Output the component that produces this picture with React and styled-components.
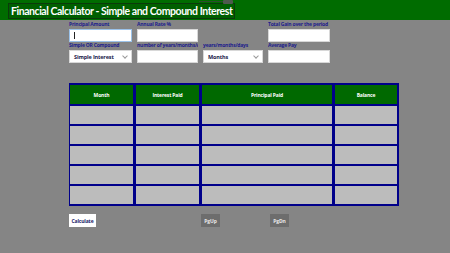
import styled, { createGlobalStyle } from 'styled-components';

const GlobalStyle = createGlobalStyle`
  html, body {
    margin: 0;
    padding: 0;
    background: #858585;
    width: 450px;
    height: 253px;
    overflow: hidden;
  }
  * { box-sizing: border-box; }
`;

const Page = styled.div`
  position: relative;
  width: 450px;
  height: 253px;
  background: #858585;
  font-family: "Open Sans", "Noto Sans", sans-serif;
`;

const TitleBar = styled.div`
  display: flex;
  align-items: flex-start;
  height: 20px;
  background: #006c00;
  padding: 3px 0 0 8px;
`;

const Title = styled.h1`
  margin: 0;
  height: 16px;
  padding: 0 2px;
  border: 1px solid #0b3a0b;
  background: #005f00;
  color: #ffffff;
  font-family: "Lato", sans-serif;
  font-weight: 700;
  font-size: 10.5px;
  line-height: 14px;
  letter-spacing: -0.45px;
  white-space: nowrap;
`;

const Thumb = styled.div`
  position: absolute;
  top: 0;
  left: 223px;
  width: 10px;
  height: 4px;
  background: #4e5a4e;
  border-radius: 1px;
  &::before {
    content: '';
    position: absolute;
    right: 10px;
    top: 1px;
    width: 24px;
    height: 1px;
    background: #2e4a2e;
  }
`;

const Form = styled.div`
  display: grid;
  grid-template-columns: 63px 61px 60px 62px;
  column-gap: 5px;
  margin: 1px 0 0 69px;
`;

const Cell = styled.div`
  display: flex;
  flex-direction: column;
  min-width: 0;
`;

const Label = styled.div`
  height: 7px;
  margin-bottom: 1px;
  font-size: 5px;
  line-height: 7px;
  font-weight: 700;
  letter-spacing: -0.2px;
  color: #1d1d8c;
  white-space: nowrap;
  overflow: hidden;
`;

const Field = styled.div`
  position: relative;
  height: 13px;
  background: #ffffff;
  border: 1px solid ${p => (p.$focus ? '#9cc3ea' : '#d8d8d8')};
  display: flex;
  align-items: center;
  padding: 0 4px;
  font-size: 5.5px;
  font-weight: 700;
  letter-spacing: -0.15px;
  color: #1a1a4a;
`;

const Caret = styled.span`
  width: 1px;
  height: 7px;
  background: #222;
`;

const Chevron = styled.span`
  margin-left: auto;
  width: 4px;
  height: 4px;
  border-right: 1px solid #999;
  border-bottom: 1px solid #999;
  transform: translateY(-1px) rotate(45deg);
`;

const Spacer = styled.div``;

const Table = styled.div`
  display: grid;
  grid-template-columns: 63px 63px 130px 62px;
  grid-template-rows: 19px repeat(5, 18px);
  column-gap: 3px;
  row-gap: 2px;
  width: 330px;
  margin: 20px 0 0 69px;
  padding: 2px 1px;
  background: #00008a;
`;

const Head = styled.div`
  background: #006900;
  color: #ffffff;
  font-size: 5px;
  font-weight: 700;
  letter-spacing: -0.15px;
  display: flex;
  align-items: center;
  justify-content: center;
`;

const Data = styled.div`
  background: #bcbcbc;
`;

const Actions = styled.div`
  display: flex;
  align-items: center;
  margin: 8px 0 0 69px;
`;

const Button = styled.button`
  height: 13px;
  width: ${p => p.$w}px;
  margin-left: ${p => p.$ml || 0}px;
  padding: 0;
  border: none;
  border-radius: 0;
  background: ${p => (p.$primary ? '#ffffff' : '#6d6d6d')};
  color: ${p => (p.$primary ? '#1a1a6a' : '#e8e8e8')};
  font-family: "Open Sans", sans-serif;
  font-size: 5px;
  font-weight: 700;
  letter-spacing: -0.15px;
`;

const columns = ['Month', 'Interest Paid', 'Principal Paid', 'Balance'];

const App = () => {
  return (
    <Page>
      <GlobalStyle />
      <TitleBar>
        <Title>Financial Calculator - Simple and Compound Interest</Title>
      </TitleBar>
      <Thumb />
      <Form>
        <Cell>
          <Label>Principal Amount</Label>
          <Field $focus><Caret /></Field>
        </Cell>
        <Cell>
          <Label>Annual Rate %</Label>
          <Field />
        </Cell>
        <Spacer />
        <Cell>
          <Label>Total Gain over the period</Label>
          <Field />
        </Cell>
        <Cell>
          <Label>Simple OR Compound</Label>
          <Field>Simple Interest<Chevron /></Field>
        </Cell>
        <Cell>
          <Label>number of years/months/days</Label>
          <Field />
        </Cell>
        <Cell>
          <Label>years/months/days</Label>
          <Field>Months<Chevron /></Field>
        </Cell>
        <Cell>
          <Label>Average  Pay</Label>
          <Field />
        </Cell>
      </Form>
      <Table>
        {columns.map(c => <Head key={c}>{c}</Head>)}
        {Array.from({ length: 20 }, (_, i) => <Data key={i} />)}
      </Table>
      <Actions>
        <Button $primary $w={27}>Calculate</Button>
        <Button $w={19} $ml={105}>PgUp</Button>
        <Button $w={19} $ml={50}>PgDn</Button>
      </Actions>
    </Page>
  );
};

export default App;
